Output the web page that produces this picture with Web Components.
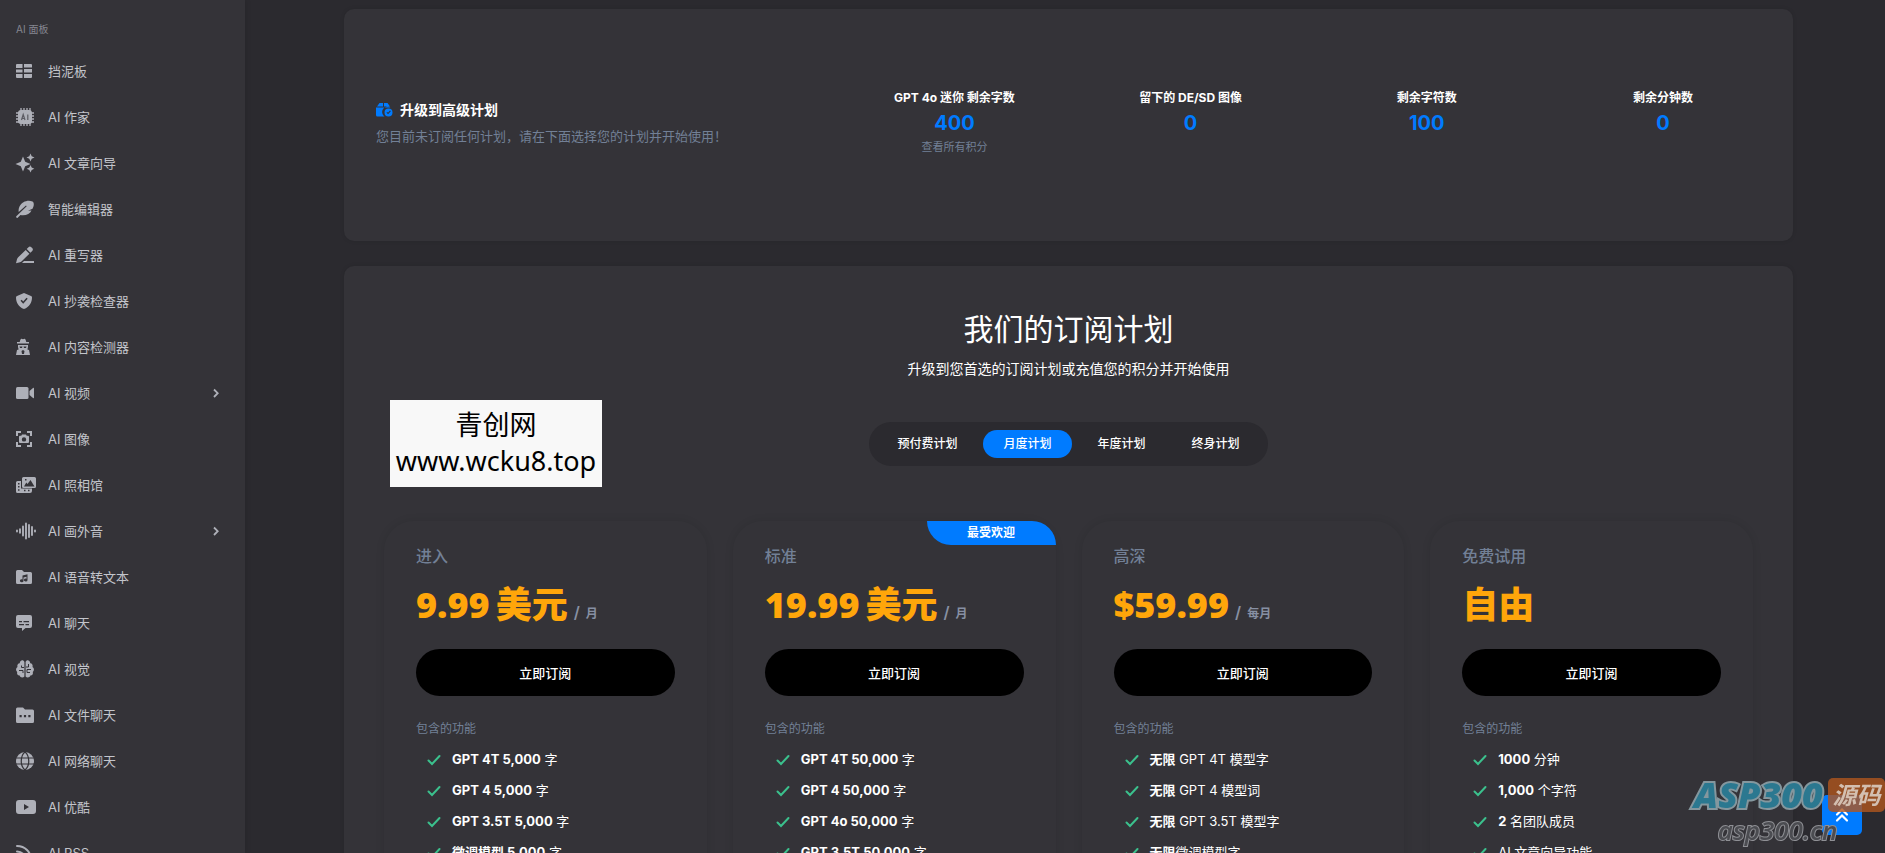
<!DOCTYPE html>
<html lang="zh-CN">
<head>
<meta charset="utf-8">
<title>订阅计划</title>
<style>
    html, body {
        height: 100%;
    }

    body {
        --page: #2b2a2f;
        --panel: #343338;
        --blue: #007bff;
        --orange: #ffa60a;
        --muted: #728096;
        margin: 0;
        overflow: hidden;
        background: var(--page);
        color: #fff;
        font: 13px/20px Inter, "Noto Sans CJK SC", sans-serif;
    }
</style>
</head>
<body>
<app-shell>
    <side-nav slot="nav"></side-nav>

    <panel-card>
        <credit-summary>
            <span slot="title">升级到高级计划</span>
            <span slot="text">您目前未订阅任何计划，请在下面选择您的计划并开始使用！</span>
            <credit-stat label="GPT 4o 迷你 剩余字数" value="400"><a href="#credits">查看所有积分</a></credit-stat>
            <credit-stat label="留下的 DE/SD 图像" value="0"></credit-stat>
            <credit-stat label="剩余字符数" value="100"></credit-stat>
            <credit-stat label="剩余分钟数" value="0"></credit-stat>
        </credit-summary>
    </panel-card>

    <panel-card>
        <plan-section>
            <span slot="title">我们的订阅计划</span>
            <span slot="text">升级到您首选的订阅计划或充值您的积分并开始使用</span>
            <plan-tabs slot="tabs"></plan-tabs>
            <plan-card name="进入" price="9.99" unit="美元" period="月">
                <li><b>GPT 4T 5,000</b> 字</li>
                <li><b>GPT 4 5,000</b> 字</li>
                <li><b>GPT 3.5T 5,000</b> 字</li>
                <li><b>微调模型 5,000</b> 字</li>
            </plan-card>
            <plan-card name="标准" price="19.99" unit="美元" period="月" badge="最受欢迎">
                <li><b>GPT 4T 50,000</b> 字</li>
                <li><b>GPT 4 50,000</b> 字</li>
                <li><b>GPT 4o 50,000</b> 字</li>
                <li><b>GPT 3.5T 50,000</b> 字</li>
            </plan-card>
            <plan-card name="高深" price="$59.99" period="每月">
                <li><b>无限</b> GPT 4T 模型字</li>
                <li><b>无限</b> GPT 4 模型词</li>
                <li><b>无限</b> GPT 3.5T 模型字</li>
                <li><b>无限</b>微调模型字</li>
            </plan-card>
            <plan-card name="免费试用" price="自由">
                <li><b>1000</b> 分钟</li>
                <li><b>1,000</b> 个字符</li>
                <li><b>2</b> 名团队成员</li>
                <li>AI 文章向导功能</li>
            </plan-card>
        </plan-section>
    </panel-card>
</app-shell>
<site-stamp></site-stamp>
<scroll-top></scroll-top>
<corner-mark></corner-mark>

<script>
const html = String.raw;

// [width, markup], every icon is 18 high
const ICONS = {
    dashboard: [18, '<path d="M1 2h5.500v4H0V3a1 1 0 0 1 1-1zM0 7.500h6.500v3H0zM0 12h6.500v4H1a1 1 0 0 1-1-1zM8 2h7a1 1 0 0 1 1 1v2.500H8zM8 7h8v3.500H8zM8 12h8v3a1 1 0 0 1-1 1H8z"/>'],
    chip: [18, '<path d="M5 0v18M8 0v18M11 0v18M14 0v18M0 5h18M0 8h18M0 11h18M0 14h18" stroke="currentColor" stroke-width="1.300"/><rect x="2" y="2" width="14" height="14" rx="3"/><path d="M5.500 12 7.200 6.500 9 12M6 10.500h2.500M11.800 6.500V12" fill="none" stroke="#5c5c63" stroke-width="1.200"/>'],
    sparkles: [18, '<path d="M7 2.500l2.200 5.300L14.500 10l-5.300 2.200L7 17.500l-2.200-5.300L-.5 10l5.300-2.200zM14.500-.5l1.200 2.800 2.800 1.200-2.800 1.200-1.200 2.800-1.200-2.800-2.800-1.200 2.800-1.200zM14.500 11l1.200 2.600 2.600 1.200-2.600 1.200-1.200 2.500-1.200-2.500-2.600-1.200 2.600-1.200z"/>'],
    feather: [18, '<path d="M16.500 1.500C12-.5 6 1.500 3.500 6.500c-1 2-1 4-.8 5.500L10 5.500l.7.7L.3 16.300a1 1 0 0 0 1.400 1.400L4.500 15c5 .8 9.500-.8 11-4.500l-3.500.3 4.500-2c1.500-2.500 2-6 0-7.300z"/>'],
    pen: [18, '<path d="M12.500 1.200a2 2 0 0 1 2.800 0l.9.900a2 2 0 0 1 0 2.800l-1.800 1.800-3.700-3.700zM9.700 4l3.700 3.700-7.400 7.400c-.5.500-1.200.9-2 1.200L0 17.300l1-4c.2-.8.6-1.500 1.200-2zM8 15h10v2H6z"/>'],
    shield: [18, '<path fill-rule="evenodd" d="M8 1l7 3c.6.2 1 .8 1 1.400C16 10 13.500 15 8 17 2.500 15 0 10 0 5.400 0 4.800.4 4.200 1 4zM4.500 8.700l2.700 3 4.500-5-1.200-1-3.300 3.700-1.500-1.700z"/>'],
    spy: [18, '<path fill-rule="evenodd" d="M5 1c.7-.5 1.300.3 2 .3S8.300.5 9 1c.7.600 1 2 1.300 3H13v1.500H1V4h2.700C4 3 4.300 1.600 5 1zM2 7h10v2l-.6 2.500L13 12l1 5H0l1-5 1.600-.5L2 9zm1.500 1.500L4 10h2l.5-1.500zM7.500 8.500 8 10h2l.5-1.500zM7 12l-1.500 1L6 16h2l.5-3z"/>'],
    video: [18, '<rect y="3" width="12.500" height="12" rx="1.500"/><path d="M13.500 7 17 4c.5-.4 1-.2 1 .5v9c0 .7-.5.900-1 .5l-3.500-3z"/>'],
    focus: [18, '<path d="M1 6V2h4M11 2h4v4M15 12v4h-4M5 16H1v-4" fill="none" stroke="currentColor" stroke-width="2"/><path fill-rule="evenodd" d="M6 4.500h4l.7 1.300H12a1 1 0 0 1 1 1V12a1 1 0 0 1-1 1H4a1 1 0 0 1-1-1V6.800a1 1 0 0 1 1-1h1.300zM8 7.200a2.200 2.200 0 1 0 0 4.400 2.200 2.200 0 0 0 0-4.400z"/>'],
    gallery: [20, '<path fill-rule="evenodd" d="M7.500 1h11A1.500 1.500 0 0 1 20 2.500v8a1.500 1.500 0 0 1-1.500 1.500h-11A1.500 1.500 0 0 1 6 10.500v-8A1.500 1.500 0 0 1 7.500 1zm.5 9.500h10.500L14.500 4l-3 4-1.200-1.500zM9 3v1.500h1.500V3z"/><path fill-rule="evenodd" d="M1.500 5H5v7.500h11V15a2 2 0 0 1-2 2H1.500A1.500 1.500 0 0 1 0 15.500v-9A1.500 1.500 0 0 1 1.500 5zM2 7v1.500h1.500V7zm0 3v1.500h1.500V10zm0 3.200v1.500h1.500v-1.500zm6 .6v1.400h1.500v-1.400zm4 0v1.400h1.500v-1.400z"/>'],
    wave: [20, '<path d="M1 8.500v1M4 7.300v3.400M7 4.500v9M10 1.500v15M13 3v12M16 5v8M19 8.500v1" fill="none" stroke="currentColor" stroke-width="1.900" stroke-linecap="round"/>'],
    music: [18, '<path fill-rule="evenodd" d="M1.500 2H6l2 2h6.500A1.500 1.500 0 0 1 16 5.500v9a1.500 1.500 0 0 1-1.500 1.500h-13A1.500 1.500 0 0 1 0 14.500v-11A1.500 1.500 0 0 1 1.500 2zM11.500 6.300 6.500 7.500v4a1.800 1.500 0 1 0 1 1.400V9.500l3-.8v2a1.800 1.500 0 1 0 1 1.300z"/>'],
    chat: [18, '<path fill-rule="evenodd" d="M2 1h12a2 2 0 0 1 2 2v9a2 2 0 0 1-2 2H9.500L6 17v-3H2a2 2 0 0 1-2-2V3a2 2 0 0 1 2-2zm1 6v1.200h3V7zm4.500 0v1.200H13V7zM3 10v1.200h5V10zm6.500 0v1.200H13V10z"/>'],
    brain: [18, '<path d="M8.400 2v14.500c-1.300 1.500-4.300 1.300-4.800-1-2 0-3-1.800-2.400-3.500C-.5 10.500-.3 8 1.500 7c-.7-2 .5-3.700 2.200-3.800C4-.2 7.600-.7 8.400 2zM9.600 2v14.500c1.300 1.500 4.300 1.300 4.800-1 2 0 3-1.800 2.400-3.500 1.700-1.500 1.500-4-.3-5 .7-2-.5-3.700-2.200-3.800C14-.2 10.400-.7 9.600 2z"/><path d="M5.500 5.500v2H8M3 10.500h4V13M12.500 4v3H10M15 9.500h-4v3h3" fill="none" stroke="#343338"/>'],
    folder: [18, '<path fill-rule="evenodd" d="M1.500 1.500H7l2 2h7.500A1.500 1.500 0 0 1 18 5v10.500a1.500 1.500 0 0 1-1.500 1.500h-15A1.500 1.500 0 0 1 0 15.500V3a1.500 1.500 0 0 1 1.500-1.500zM3.500 9v2.200h2.200V9zm4.400 0v2.200h2.200V9zm4.400 0v2.200h2.200V9z"/>'],
    globe: [18, '<circle cx="9" cy="9" r="9"/><path d="M0 6h18M0 12h18M9 0C4 4 4 14 9 18M9 0c5 4 5 14 0 18" fill="none" stroke="#343338" stroke-width="1.200"/>'],
    tube: [20, '<path fill-rule="evenodd" d="M3 2h14a3 3 0 0 1 3 3v8a3 3 0 0 1-3 3H3a3 3 0 0 1-3-3V5a3 3 0 0 1 3-3zm5 4v6l5-3z"/>'],
    rss: [18, '<circle cx="2.500" cy="15" r="2"/><path d="M1 7.500c5 0 8.500 3.500 8.500 8.500M1 2c8 0 14 6 14 14" fill="none" stroke="currentColor" stroke-width="2" stroke-linecap="round"/>'],
    box: [18, '<path d="M3.500 2H7v3.500H1zM8 2h3.500L14 5.500H8zM0 6.500h14.500a5 5 0 0 0-6 9H1.500A1.500 1.500 0 0 1 0 14z"/><path fill-rule="evenodd" d="M12.500 7.500a4 4 0 1 0 0 8 4 4 0 0 0 0-8zm-2 4 1.500 1.700 2.800-3-.8-.7-2 2.200-.8-.8z"/>'],
    right: [6, '<path d="M1 5.500 4.700 9.200 1 13" fill="none" stroke="currentColor" stroke-width="1.800"/>'],
    check: [14, '<path d="M1.500 9.500 5 13l7.500-8" fill="none" stroke="currentColor" stroke-width="2" stroke-linecap="round"/>'],
    top: [14, '<path d="M2 8.500l5-5 5 5M2 14.500l5-5 5 5" fill="none" stroke="currentColor" stroke-width="2.200" stroke-linecap="round"/>']
};

function icon(name) {
    const [width, body] = ICONS[name];
    return html`<svg aria-hidden="true" width="${width}" height="18" viewBox="0 0 ${width} 18" fill="currentColor">${body}</svg>`;
}

class Base extends HTMLElement {

    constructor() {
        super();
        this.shadow = this.attachShadow({mode: 'open'});
    }

    connectedCallback() {
        this.shadow.innerHTML = this.render();
    }
}

class AppShell extends Base {
    render() {
        return html`
        <style>
            :host { display: flex; height: 100vh; overflow: hidden; }
            main {
                flex: 1;
                min-width: 0;
                padding: 9px 92px 0 99px;
                display: flex;
                flex-direction: column;
                gap: 25px;
            }
        </style>
        <slot name="nav"></slot>
        <main><slot></slot></main>
        `;
    }
}

class SideNav extends Base {
    render() {
        const items = [
            ['dashboard', '挡泥板'], ['chip', 'AI 作家'], ['sparkles', 'AI 文章向导'],
            ['feather', '智能编辑器'], ['pen', 'AI 重写器'], ['shield', 'AI 抄袭检查器'],
            ['spy', 'AI 内容检测器'], ['video', 'AI 视频', true], ['focus', 'AI 图像'],
            ['gallery', 'AI 照相馆'], ['wave', 'AI 画外音', true], ['music', 'AI 语音转文本'],
            ['chat', 'AI 聊天'], ['brain', 'AI 视觉'], ['folder', 'AI 文件聊天'],
            ['globe', 'AI 网络聊天'], ['tube', 'AI 优酷'], ['rss', 'AI RSS']
        ];
        return html`
        <style>
            :host {
                display: block;
                box-sizing: border-box;
                flex: 0 0 245px;
                padding-top: 19px;
                background: var(--panel);
                box-shadow: 0 0 6px rgba(0, 0, 0, .15);
                color: #c3c5cb;
            }
            h2 {
                margin: 0 0 9px 16px;
                font-size: 10px;
                line-height: 20px;
                font-weight: 400;
                color: #858690;
            }
            a {
                display: grid;
                grid-template-columns: 32px 1fr auto;
                align-items: center;
                height: 46px;
                padding: 0 26px 0 16px;
                color: inherit;
                text-decoration: none;
            }
            svg { color: #aeb0b8; overflow: visible; }
        </style>
        <h2>AI 面板</h2>
        <nav>
            ${items.map(([name, text, more]) => html`<a href="#${name}">${icon(name)}<span>${text}</span>${more ? icon('right') : ''}</a>`).join('')}
        </nav>
        `;
    }
}

class PanelCard extends Base {
    render() {
        return html`
        <style>
            :host {
                display: block;
                flex-shrink: 0;
                border-radius: 10px;
                background: var(--panel);
                box-shadow: 0 0 4px rgba(0, 0, 0, .1);
            }
        </style>
        <slot></slot>
        `;
    }
}

class CreditSummary extends Base {
    render() {
        return html`
        <style>
            :host {
                display: grid;
                grid-template-columns: 1fr 2fr;
                padding: 78px 12px 84px 20px;
            }
            .intro { padding: 11px 12px 0; }
            h1 {
                display: flex;
                align-items: center;
                gap: 6px;
                margin: 0;
                font-size: 14px;
                line-height: 24px;
                font-weight: 700;
            }
            h1 svg { color: var(--blue); }
            p { margin: 4px 0 0; color: var(--muted); }
            .stats { display: grid; grid-template-columns: repeat(4, 1fr); }
        </style>
        <div class="intro">
            <h1>${icon('box')}<slot name="title"></slot></h1>
            <p><slot name="text"></slot></p>
        </div>
        <div class="stats"><slot></slot></div>
        `;
    }
}

class CreditStat extends Base {
    render() {
        return html`
        <style>
            :host { display: block; text-align: center; }
            h2 { margin: 0; font-size: 12px; line-height: 22px; font-weight: 700; }
            strong { display: block; font-size: 20px; line-height: 28px; font-weight: 700; color: var(--blue); }
            ::slotted(a) {
                display: block;
                font-size: 11px;
                line-height: 20px;
                color: var(--muted);
                text-decoration: none;
            }
        </style>
        <h2>${this.getAttribute('label')}</h2>
        <strong>${this.getAttribute('value')}</strong>
        <slot></slot>
        `;
    }
}

class PlanSection extends Base {
    render() {
        return html`
        <style>
            :host { display: block; padding: 40px; text-align: center; }
            h1 { margin: 0; font-size: 30px; line-height: 46px; font-weight: 400; }
            p { margin: 6px 0 42px; font-size: 14px; line-height: 22px; }
            .plans {
                display: grid;
                grid-template-columns: repeat(4, 1fr);
                gap: 26px;
                margin-top: 55px;
                text-align: left;
            }
        </style>
        <h1><slot name="title"></slot></h1>
        <p><slot name="text"></slot></p>
        <slot name="tabs"></slot>
        <div class="plans"><slot></slot></div>
        `;
    }
}

class PlanTabs extends Base {

    connectedCallback() {
        super.connectedCallback();
        this.shadow.addEventListener('click', e => {
            const tab = e.target.closest('button');
            if (!tab) return;
            this.shadow.querySelectorAll('button').forEach(b => b.setAttribute('aria-selected', b === tab));
        });
    }

    render() {
        const tabs = ['预付费计划', '月度计划', '年度计划', '终身计划'];
        return html`
        <style>
            :host {
                display: inline-flex;
                padding: 8px;
                border-radius: 22px;
                background: var(--page);
                vertical-align: top;
            }
            div { display: flex; gap: 6px; }
            button {
                height: 28px;
                padding: 0 20px;
                border: 0;
                border-radius: 14px;
                background: none;
                color: #fff;
                font: 500 12px/28px Inter, "Noto Sans CJK SC", sans-serif;
            }
            button[aria-selected="true"] { background: var(--blue); }
        </style>
        <div role="tablist">
            ${tabs.map((t, i) => html`<button type="button" role="tab" aria-selected="${i === 1}">${t}</button>`).join('')}
        </div>
        `;
    }
}

class PlanCard extends Base {

    connectedCallback() {
        super.connectedCallback();
        const list = this.shadow.querySelector('ul');
        this.querySelectorAll('li').forEach(li => {
            const text = document.createElement('span');
            text.append(...li.childNodes);
            li.innerHTML = icon('check');
            li.append(text);
            list.append(li);
        });
    }

    render() {
        const badge = this.getAttribute('badge');
        const unit = this.getAttribute('unit');
        const period = this.getAttribute('period');
        return html`
        <style>
            :host {
                display: block;
                position: relative;
                padding: 24px 32px;
                border-radius: 30px;
                box-shadow: 0 0 8px rgba(0, 0, 0, .1);
            }
            .badge {
                position: absolute;
                top: 0;
                right: 0;
                width: 129px;
                border-radius: 0 25px 0 25px;
                background: var(--blue);
                font-size: 12px;
                line-height: 24px;
                font-weight: 700;
                text-align: center;
            }
            h2 {
                margin: 0 0 15px;
                font-size: 16px;
                line-height: 22px;
                font-weight: 500;
                color: var(--muted);
            }
            .price {
                display: flex;
                align-items: baseline;
                gap: 6px;
                margin: 0 0 21px;
                height: 46px;
                font: 800 36px/46px "Open Sans", "Noto Sans CJK SC", sans-serif;
                color: var(--orange);
                white-space: nowrap;
            }
            small {
                display: flex;
                align-items: baseline;
                gap: 6px;
                font: 600 16px/16px Inter, sans-serif;
                color: #8790a3;
            }
            small span { font: 700 12px/16px "Noto Sans CJK SC", sans-serif; }
            button {
                width: 100%;
                height: 47px;
                border: 0;
                border-radius: 24px;
                background: #000;
                color: #fff;
                font: 500 13px/20px Inter, "Noto Sans CJK SC", sans-serif;
            }
            h3 {
                margin: 24px 0 6px;
                font-size: 12px;
                line-height: 18px;
                font-weight: 400;
                color: var(--muted);
            }
            ul { margin: 0; padding: 0 0 0 11px; list-style: none; }
            li { display: flex; align-items: center; gap: 11px; line-height: 31px; }
            li svg { color: #3bc18d; }
            b { font-weight: 700; }
        </style>
        ${badge ? html`<div class="badge">${badge}</div>` : ''}
        <h2>${this.getAttribute('name')}</h2>
        <div class="price">
            <span>${this.getAttribute('price')}</span>
            ${unit ? html`<span>${unit}</span>` : ''}
            ${period ? html`<small>/ <span>${period}</span></small>` : ''}
        </div>
        <button type="button">立即订阅</button>
        <h3>包含的功能</h3>
        <ul></ul>
        `;
    }
}

// white label lying over the plans panel
class SiteStamp extends Base {
    render() {
        return html`
        <style>
            :host {
                position: absolute;
                top: 400px;
                left: 390px;
                width: 212px;
                padding: 7px 0 8px;
                background: #f8f8f8;
                color: #000;
                font: 27px/36px "Noto Sans", "Noto Sans CJK SC", sans-serif;
                text-align: center;
            }
            div { white-space: nowrap; }
        </style>
        <div>青创网</div>
        <div>www.wcku8.top</div>
        `;
    }
}

class ScrollTop extends Base {
    render() {
        return html`
        <style>
            :host { position: fixed; right: 23px; bottom: 18px; }
            button {
                display: grid;
                place-items: center;
                width: 40px;
                height: 40px;
                padding: 0;
                border: 0;
                border-radius: 5px;
                background: var(--blue);
                color: #fff;
            }
        </style>
        <button type="button" aria-label="返回顶部">${icon('top')}</button>
        `;
    }
}

class CornerMark extends Base {
    render() {
        return html`
        <style>
            :host {
                position: fixed;
                right: 0;
                bottom: 9px;
                display: grid;
                grid-template-columns: auto 57px;
                column-gap: 5px;
                pointer-events: none;
                font-family: "Open Sans", "Noto Sans CJK SC", sans-serif;
                font-style: italic;
                paint-order: stroke fill;
                white-space: nowrap;
            }
            .name {
                font-size: 36px;
                line-height: 34px;
                font-weight: 800;
                color: #2b7890;
                -webkit-text-stroke: 4px #84979e;
            }
            .tag {
                border-radius: 5px;
                background: rgba(176, 86, 30, .8);
                color: #d3bfb0;
                font-size: 24px;
                line-height: 34px;
                font-weight: 700;
                text-align: center;
            }
            .url {
                grid-column: 1 / 3;
                padding: 4px 0 0 24px;
                font-size: 26px;
                line-height: 28px;
                font-weight: 600;
                color: #4b4c51;
                -webkit-text-stroke: 2px #8f9095;
            }
        </style>
        <div class="name">ASP300</div>
        <div class="tag">源码</div>
        <div class="url">asp300.cn</div>
        `;
    }
}

customElements.define('app-shell', AppShell);
customElements.define('side-nav', SideNav);
customElements.define('panel-card', PanelCard);
customElements.define('credit-summary', CreditSummary);
customElements.define('credit-stat', CreditStat);
customElements.define('plan-section', PlanSection);
customElements.define('plan-tabs', PlanTabs);
customElements.define('plan-card', PlanCard);
customElements.define('site-stamp', SiteStamp);
customElements.define('scroll-top', ScrollTop);
customElements.define('corner-mark', CornerMark);
</script>
</body>
</html>
